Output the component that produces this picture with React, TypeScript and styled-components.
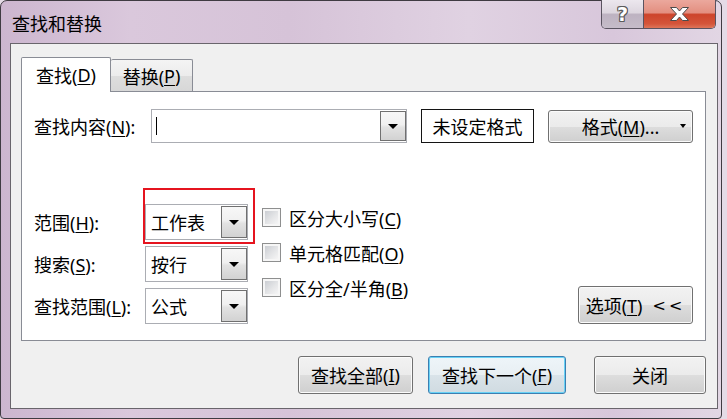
import React from "react";
import styled, { createGlobalStyle, css } from "styled-components";

const FONT = `"Noto Sans", "Noto Sans CJK SC", sans-serif`;

const GlobalStyle = createGlobalStyle`
  html, body { margin: 0; padding: 0; }
  body {
    width: 727px;
    height: 419px;
    overflow: hidden;
    background: #e4dbe6;
    font-family: ${FONT};
    color: #000;
  }
`;

const Window = styled.div`
  box-sizing: border-box;
  width: 722px;
  height: 419px;
  border: 1px solid #3f3b42;
  border-radius: 7px 7px 4px 4px;
  background: linear-gradient(90deg, #ccb6cf 0%, #dac8dc 18%, #d6c3d8 40%, #e0d2e2 65%, #d8c7db 85%, #e2d6e4 100%);
  display: flex;
  flex-direction: column;
`;

const TitleBar = styled.div`
  height: 42px;
  flex-shrink: 0;
  display: flex;
  align-items: flex-start;
  padding: 0 5px 0 11px;
`;

const TitleText = styled.div`
  flex: 1;
  align-self: stretch;
  display: flex;
  align-items: center;
  padding-top: 2px;
  font-size: 18px;
  color: #000;
`;

const CaptionGroup = styled.div`
  display: flex;
  box-sizing: border-box;
  height: 29px;
  margin-top: -1px;
  border: 1px solid #5a5360;
  border-top: none;
  border-radius: 0 0 5px 5px;
  overflow: hidden;
`;

const CaptionButton = styled.div<{ $kind: "help" | "close" }>`
  display: flex;
  align-items: center;
  justify-content: center;
  ${(p) =>
    p.$kind === "help"
      ? css`
          width: 41px;
          border-right: 1px solid #5a5360;
          background: linear-gradient(#ece7ee 0%, #ddd6df 45%, #bdb2c1 52%, #c6bcc9 100%);
        `
      : css`
          width: 71px;
          background: linear-gradient(#eba89d 0%, #e38f80 45%, #cd442b 52%, #d4553a 85%, #de7559 100%);
        `}
`;

const HelpGlyph = styled.span`
  font-family: "DejaVu Sans", sans-serif;
  font-weight: 700;
  font-size: 19px;
  line-height: 1;
  color: #fff;
  text-shadow: -1px 0 #5b5b5b, 1px 0 #5b5b5b, 0 -1px #5b5b5b, 0 1px #5b5b5b,
    -1px -1px #5b5b5b, 1px 1px #5b5b5b, -1px 1px #5b5b5b, 1px -1px #5b5b5b;
`;

const Client = styled.div`
  flex: 1;
  margin: 0 3px 9px 9px;
  border: 1px solid #69656c;
  background: #f0f0f0;
  display: flex;
  flex-direction: column;
  padding: 13px 11px 14px 10px;
`;

const TabStrip = styled.div`
  height: 34px;
  display: flex;
  align-items: flex-end;
  position: relative;
  z-index: 1;
`;

const Tab = styled.div<{ $active?: boolean }>`
  box-sizing: border-box;
  display: flex;
  align-items: center;
  justify-content: center;
  font-size: 18px;
  border: 1px solid #898c95;
  border-bottom: none;
  border-radius: 2px 2px 0 0;
  ${(p) =>
    p.$active
      ? css`
          width: 90px;
          height: 35px;
          margin-bottom: -1px;
          background: #fff;
        `
      : css`
          width: 82px;
          height: 32px;
          border-left: none;
          background: linear-gradient(#f4f4f4 0%, #ececec 50%, #dedede 51%, #d7d7d7 100%);
        `}
`;

const Panel = styled.div`
  box-sizing: border-box;
  height: 250px;
  border: 1px solid #898c95;
  background: #fff;
  padding: 17px 12px 16px 12px;
  display: flex;
  flex-direction: column;
  justify-content: space-between;
`;

const FindRow = styled.div`
  height: 34px;
  display: flex;
  align-items: center;
`;

const Label = styled.div<{ $width?: number }>`
  font-size: 18px;
  white-space: nowrap;
  ${(p) => p.$width && css`width: ${p.$width}px;`}
`;

const Key = styled.span`
  text-decoration: underline;
  text-decoration-thickness: 1px;
  text-underline-offset: 2px;
`;

const Combo = styled.div<{ $width: number; $height: number }>`
  box-sizing: border-box;
  width: ${(p) => p.$width}px;
  height: ${(p) => p.$height}px;
  border: 1px solid #abadb3;
  background: #fff;
  display: flex;
  align-items: stretch;
`;

const ComboValue = styled.div`
  flex: 1;
  display: flex;
  align-items: center;
  padding-left: 5px;
  font-size: 18px;
`;

const Caret = styled.span`
  width: 1px;
  height: 18px;
  margin-left: -1px;
  background: #000;
`;

const DropButton = styled.div`
  box-sizing: border-box;
  width: 26px;
  margin: 1px 0;
  border: 1px solid #707070;
  background: linear-gradient(#f7f7f7 0%, #f0f0f0 45%, #e2e2e2 55%, #d2d2d2 100%);
  display: flex;
  align-items: center;
  justify-content: center;
`;

const Arrow = styled.span<{ $small?: boolean }>`
  width: 0;
  height: 0;
  border-left: ${(p) => (p.$small ? 3 : 5)}px solid transparent;
  border-right: ${(p) => (p.$small ? 3 : 5)}px solid transparent;
  border-top: ${(p) => (p.$small ? 4 : 5)}px solid #000;
`;

const FormatStatus = styled.div`
  box-sizing: border-box;
  width: 113px;
  height: 34px;
  margin-left: 14px;
  border: 1px solid #141414;
  display: flex;
  align-items: center;
  justify-content: center;
  font-size: 18px;
`;

const Button = styled.button<{ $width: number; $height?: number; $default?: boolean; $gap?: number }>`
  box-sizing: border-box;
  width: ${(p) => p.$width}px;
  height: ${(p) => p.$height ?? 38}px;
  margin: 0 0 0 ${(p) => p.$gap ?? 0}px;
  padding: 0;
  border-radius: 3px;
  font-family: ${FONT};
  font-size: 18px;
  color: #000;
  display: flex;
  align-items: center;
  justify-content: center;
  ${(p) =>
    p.$default
      ? css`
          border: 1px solid #3c7fb1;
          background: linear-gradient(#eef5f9 0%, #e8eff3 50%, #d9e3e9 51%, #d0dbe1 100%);
          box-shadow: inset 0 0 0 1px #68d2f6;
        `
      : css`
          border: 1px solid #707070;
          background: linear-gradient(#f2f2f2 0%, #ebebeb 50%, #dddddd 51%, #cfcfcf 100%);
          box-shadow: inset 0 0 0 1px #fbfbfb;
        `}
`;

const SplitButton = styled(Button)`
  display: grid;
  grid-template-columns: 1fr auto 1fr;
  align-items: center;
  margin-left: 14px;
`;

const SplitArrow = styled.span`
  justify-self: end;
  margin-right: 6px;
  display: flex;
`;

const Lower = styled.div`
  display: flex;
  align-items: flex-end;
`;

const FieldGrid = styled.div`
  display: grid;
  grid-template-columns: 111px 103px;
  grid-auto-rows: 36px;
  row-gap: 6px;
  align-items: center;
`;

const HighlightWrap = styled.div`
  position: relative;
`;

const Highlight = styled.div`
  position: absolute;
  left: -2px;
  top: -16px;
  right: -7px;
  bottom: -4px;
  border: 2px solid #e5141f;
  pointer-events: none;
`;

const CheckColumn = styled.div`
  align-self: flex-start;
  margin-left: 14px;
  padding-top: 4px;
  display: flex;
  flex-direction: column;
  gap: 16px;
`;

const CheckRow = styled.label`
  display: flex;
  align-items: center;
  gap: 8px;
  height: 19px;
  font-size: 18px;
`;

const CheckBox = styled.span`
  box-sizing: border-box;
  width: 19px;
  height: 19px;
  padding: 2px;
  border: 1px solid #8e8f8f;
  background: linear-gradient(135deg, #cbced3 0%, #e4e5e7 55%, #f5f5f5 100%) content-box, #f6f6f6;
`;

const OptionsButton = styled(Button)`
  margin-left: auto;
  gap: 10px;
`;

const Chevrons = styled.span`
  letter-spacing: 3px;
  font-family: "DejaVu Sans", sans-serif;
  font-size: 16px;
`;

const ButtonRow = styled.div`
  margin-top: 15px;
  display: flex;
  justify-content: flex-end;
`;

const CloseIcon = () => (
  <svg width="21" height="16" viewBox="0 0 21 16">
    <polygon
      points="1.5,1.5 7.5,1.5 10.5,5 13.5,1.5 19.5,1.5 13.5,8 19.5,14.5 13.5,14.5 10.5,11 7.5,14.5 1.5,14.5 7.5,8"
      fill="#fff"
      stroke="#4c4c4c"
      strokeWidth="1"
      strokeLinejoin="round"
    />
  </svg>
);

const fields = [
  { label: "范围", key: "H", value: "工作表", highlight: true },
  { label: "搜索", key: "S", value: "按行" },
  { label: "查找范围", key: "L", value: "公式" },
];

const checks = [
  { label: "区分大小写", key: "C" },
  { label: "单元格匹配", key: "O" },
  { label: "区分全/半角", key: "B" },
];

export default function App() {
  return (
    <>
      <GlobalStyle />
      <Window>
        <TitleBar>
          <TitleText>查找和替换</TitleText>
          <CaptionGroup>
            <CaptionButton $kind="help">
              <HelpGlyph>?</HelpGlyph>
            </CaptionButton>
            <CaptionButton $kind="close">
              <CloseIcon />
            </CaptionButton>
          </CaptionGroup>
        </TitleBar>
        <Client>
          <TabStrip>
            <Tab $active>
              查找(<Key>D</Key>)
            </Tab>
            <Tab>
              替换(<Key>P</Key>)
            </Tab>
          </TabStrip>
          <Panel>
            <FindRow>
              <Label $width={117}>
                查找内容(<Key>N</Key>):
              </Label>
              <Combo $width={256} $height={34}>
                <ComboValue>
                  <Caret />
                </ComboValue>
                <DropButton>
                  <Arrow />
                </DropButton>
              </Combo>
              <FormatStatus>未设定格式</FormatStatus>
              <SplitButton $width={145} $height={33}>
                <span />
                <span>
                  格式(<Key>M</Key>)...
                </span>
                <SplitArrow>
                  <Arrow $small />
                </SplitArrow>
              </SplitButton>
            </FindRow>
            <Lower>
              <FieldGrid>
                {fields.map((f) => {
                  const combo = (
                    <Combo $width={103} $height={36}>
                      <ComboValue>{f.value}</ComboValue>
                      <DropButton>
                        <Arrow />
                      </DropButton>
                    </Combo>
                  );
                  return (
                    <React.Fragment key={f.key}>
                      <Label>
                        {f.label}(<Key>{f.key}</Key>):
                      </Label>
                      {f.highlight ? (
                        <HighlightWrap>
                          {combo}
                          <Highlight />
                        </HighlightWrap>
                      ) : (
                        combo
                      )}
                    </React.Fragment>
                  );
                })}
              </FieldGrid>
              <CheckColumn>
                {checks.map((c) => (
                  <CheckRow key={c.key}>
                    <CheckBox />
                    <span>
                      {c.label}(<Key>{c.key}</Key>)
                    </span>
                  </CheckRow>
                ))}
              </CheckColumn>
              <OptionsButton $width={115}>
                <span>
                  选项(<Key>T</Key>)
                </span>
                <Chevrons>&lt;&lt;</Chevrons>
              </OptionsButton>
            </Lower>
          </Panel>
          <ButtonRow>
            <Button $width={115}>
              查找全部(<Key>I</Key>)
            </Button>
            <Button $width={138} $gap={15} $default>
              查找下一个(<Key>F</Key>)
            </Button>
            <Button $width={112} $gap={28}>
              关闭
            </Button>
          </ButtonRow>
        </Client>
      </Window>
    </>
  );
}
